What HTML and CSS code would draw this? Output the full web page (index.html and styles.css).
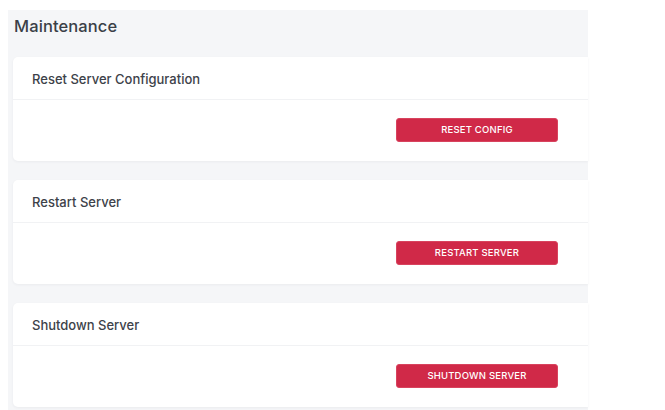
FILE: index.html
```html
<!DOCTYPE html>
<html lang="en">
<head>
<meta charset="utf-8">
<title>Maintenance</title>
<link rel="stylesheet" href="styles.css">
</head>
<body>
<main class="panel">
  <h1 class="page-title">Maintenance</h1>
  <section class="card">
    <div class="card-header">Reset Server Configuration</div>
    <div class="card-body"><button class="btn-danger">Reset Config</button></div>
  </section>
  <section class="card">
    <div class="card-header">Restart Server</div>
    <div class="card-body"><button class="btn-danger">Restart Server</button></div>
  </section>
  <section class="card">
    <div class="card-header">Shutdown Server</div>
    <div class="card-body"><button class="btn-danger">Shutdown Server</button></div>
  </section>
</main>
</body>
</html>
```

FILE: styles.css
```css
html, body {
  height: 100%;
}
body {
  margin: 0;
  padding: 10px 0 0 8px;
  box-sizing: border-box;
  background: #ffffff;
  font-family: "Inter", "Open Sans", "Liberation Sans", sans-serif;
  overflow: hidden;
}
.panel {
  width: 580px;
  min-height: 100%;
  background: #f5f6f8;
  padding: 0 0 4px 5px;
  box-sizing: border-box;
  display: flex;
  flex-direction: column;
  gap: 19px;
}
.page-title {
  flex: none;
  margin: 0;
  padding: 6px 0 0 1px;
  height: 27.5px;
  box-sizing: border-box;
  font-size: 16.5px;
  line-height: 20px;
  font-weight: 500;
  color: #3a3f47;
  letter-spacing: 0.1px;
}
.card {
  flex: none;
  background: #ffffff;
  border-radius: 5px 0 0 5px;
  box-shadow: 0 1px 3px rgba(30, 40, 60, 0.05);
}
.card-header {
  height: 43px;
  box-sizing: border-box;
  padding: 14px 0 0 19px;
  font-size: 13px;
  line-height: 17px;
  font-weight: 500;
  color: #3d4249;
  border-bottom: 1px solid #f1f2f4;
}
.card-body {
  height: 61px;
  box-sizing: border-box;
  padding: 18px 30px 0 0;
  display: flex;
  justify-content: flex-end;
}
.btn-danger {
  width: 162px;
  height: 24px;
  padding: 0;
  border: 1px solid #d8435e;
  border-radius: 3px;
  background: #d02948;
  color: #ffffff;
  font-family: inherit;
  font-size: 9.5px;
  font-weight: 500;
  text-transform: uppercase;
  letter-spacing: 0.2px;
}
```
